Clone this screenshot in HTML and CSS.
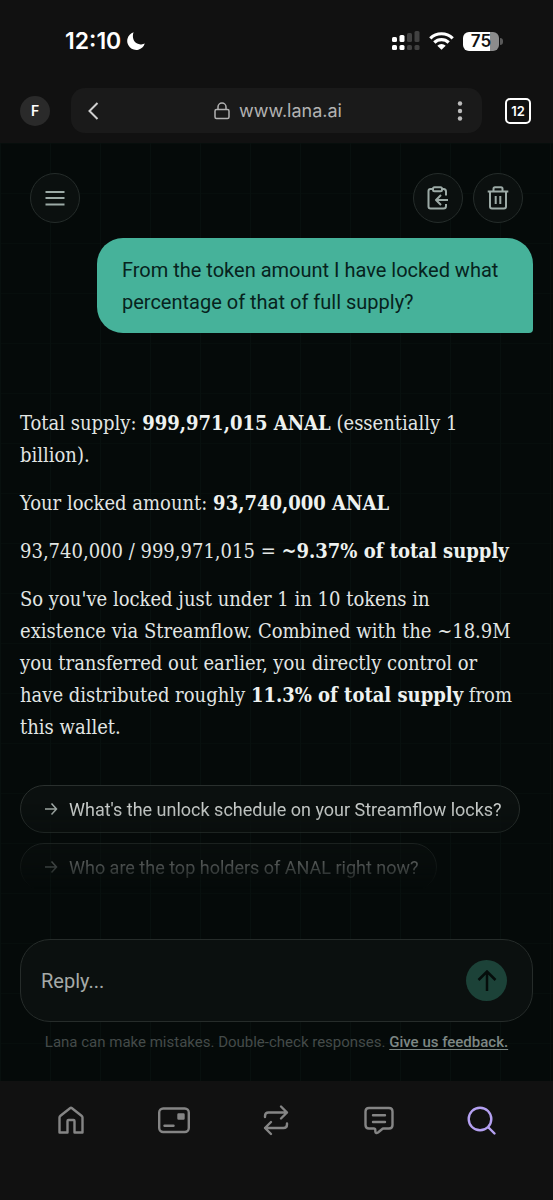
FILE: index.html
```html
<!DOCTYPE html>
<html lang="en">
<head>
<meta charset="utf-8">
<meta name="viewport" content="width=device-width, initial-scale=1">
<title>Lana</title>
<link rel="stylesheet" href="styles.css">
</head>
<body>
<header class="browser">
  <div class="status">
    <div class="clock">
      <span>12:10</span>
      <svg width="18" height="18" viewBox="0 0 18 18"><path fill="#fff" d="M6.600.3A9 9 0 1 0 17.800 11.600Q16 12.600 13.500 12.400C7 12 4.500 5.500 6.600.3Z"/></svg>
    </div>
    <div class="signals">
      <svg width="28" height="20" viewBox="0 0 28 20">
        <g fill="#fff"><rect y="6" width="5" height="5" rx="1.500"/><rect x="7.500" y="4" width="5" height="7" rx="1.500"/><rect y="14" width="5" height="5" rx="1.500"/><rect x="7.500" y="14" width="5" height="5" rx="1.500"/></g>
        <g fill="#414141"><rect x="15" y="2" width="5" height="9" rx="1.500"/><rect x="22.500" y="0" width="5" height="11" rx="1.500"/><rect x="15" y="14" width="5" height="5" rx="1.500"/><rect x="22.500" y="14" width="5" height="5" rx="1.500"/></g>
      </svg>
      <svg width="25" height="18" viewBox="0 0 25 18"><g fill="none" stroke="#fff" stroke-width="3.200"><path d="M1.300 6.300a16 16 0 0 1 22.400 0"/><path d="M5.300 10.500a10.300 10.300 0 0 1 14.400 0"/></g><path fill="#fff" d="M12.500 17.800 8.300 13.700a6 6 0 0 1 8.400 0Z"/></svg>
      <div class="battery"><span>75</span></div>
    </div>
  </div>
  <div class="address-row">
    <button class="avatar" aria-label="Profile">F</button>
    <div class="address">
      <button aria-label="Back"><svg width="12" height="20" viewBox="0 0 12 20"><path d="M10.500 2 2.500 10l8 8" fill="none" stroke="#d0d0d0" stroke-width="2"/></svg></button>
      <div class="url">
        <svg width="16" height="18" viewBox="0 0 16 18" fill="none" stroke="#b2b2b2" stroke-width="1.500"><rect x="1" y="7.500" width="14" height="9" rx="1.500"/><path d="M4 7.500V5a4 4 0 0 1 8 0v2.500"/></svg>
        <span>www.lana.ai</span>
      </div>
      <button aria-label="More"><svg width="6" height="20" viewBox="0 0 6 20" fill="#bcbcbc"><circle cx="3" cy="2.500" r="2.200"/><circle cx="3" cy="10" r="2.200"/><circle cx="3" cy="17.500" r="2.200"/></svg></button>
    </div>
    <button class="tabs" aria-label="Open tabs">12</button>
  </div>
</header>

<main class="page">
  <div class="toolbar">
    <button class="round" aria-label="Menu"><svg width="20" height="16" viewBox="0 0 20 16"><path d="M.5 2h19M.5 8h19M.5 14.500h19" stroke="#9caaa6" stroke-width="2"/></svg></button>
    <div class="tools">
      <button class="round" aria-label="Export"><svg width="22" height="24" viewBox="0 0 22 24" fill="none" stroke="#9caaa6" stroke-width="2" stroke-linejoin="round"><rect x="6" y="1.200" width="9" height="4" rx="1.500"/><path d="M6 3H3.500Q1.500 3 1.500 5v15.500q0 2 2 2h13q2.500 0 2.500-2.500v-2M15 3h1.500Q19 3 19 5.500V9.500M21 14H9.500M14 9l-5 5 5 5"/></svg></button>
      <button class="round" aria-label="Delete"><svg width="22" height="24" viewBox="0 0 22 24" fill="none" stroke="#9caaa6" stroke-width="2"><path d="M.7 5.500h20.600M6.500 5V2.800q0-1.500 1.500-1.500h6q1.500 0 1.500 1.500V5M3 5.500V20.500q0 2 2 2h12q2 0 2-2V5.500M8.700 10v8M13.300 10v8"/></svg></button>
    </div>
  </div>

  <p class="bubble">From the token amount I have locked what percentage of that of full supply?</p>

  <article class="answer">
    <p>Total supply: <strong>999,971,015 ANAL</strong> (essentially 1 billion).</p>
    <p>Your locked amount: <strong>93,740,000 ANAL</strong></p>
    <p>93,740,000 / 999,971,015 = <strong>~9.37% of total supply</strong></p>
    <p>So you've locked just under 1 in 10 tokens in existence via Streamflow. Combined with the ~18.9M you transferred out earlier, you directly control or have distributed roughly <strong>11.3% of total supply</strong> from this wallet.</p>
  </article>

  <div class="suggestions">
    <button class="chip"><svg width="14" height="14" viewBox="0 0 14 14"><path d="M1 7h11M7.500 1.500 12.500 7l-5 5.500"/></svg>What's the unlock schedule on your Streamflow locks?</button>
    <button class="chip"><svg width="14" height="14" viewBox="0 0 14 14"><path d="M1 7h11M7.500 1.500 12.500 7l-5 5.500"/></svg>Who are the top holders of ANAL right now?</button>
  </div>

  <form class="composer">
    <input type="text" placeholder="Reply..." aria-label="Reply">
    <button type="button" class="send" aria-label="Send"><svg width="20" height="22" viewBox="0 0 20 22"><path d="M10 21V2M1.500 10 10 1.500l8.500 8.500" fill="none" stroke="#050d0b" stroke-width="2.500"/></svg></button>
  </form>
  <p class="note">Lana can make mistakes. Double-check responses. <a href="#feedback">Give us feedback.</a></p>
</main>

<nav class="bottom">
  <a href="#home" aria-label="Home"><svg width="32" height="32" viewBox="0 0 32 32"><path d="M4.500 13.500Q4.500 12.500 5.500 11.700L15 4.200q1-.8 2 0l9.500 7.500q1 .8 1 1.800V28.500H19.500V17q0-1-1-1h-5q-1 0-1 1V28.500H4.500Z"/></svg></a>
  <a href="#wallet" aria-label="Wallet"><svg width="32" height="32" viewBox="0 0 32 32"><rect x="1.200" y="4.500" width="29.600" height="23.500" rx="4"/><path d="M6.500 21.700h9"/><rect x="20.500" y="10.500" width="5" height="4" fill="currentColor"/></svg></a>
  <a href="#swap" aria-label="Swap"><svg width="32" height="32" viewBox="0 0 32 32"><path d="M5 13V12Q5 8.500 8.500 8.500H27M21 2.500l6 6-6 6M27 19.500v1q0 3.500-3.500 3.500H5M11 18l-6 6 6 6"/></svg></a>
  <a href="#messages" aria-label="Messages"><svg width="32" height="32" viewBox="0 0 32 32"><path d="M6 4h20q3.500 0 3.500 3.500V21q0 3.500-3.500 3.500h-5.500Q19.500 24.500 18.700 25.500L15 28.500Q12.500 30 12.300 27.300V26q0-1.500-1.500-1.500H6Q2.500 24.500 2.500 21V7.500Q2.500 4 6 4ZM10 11.300h12M10 18h12"/></svg></a>
  <a href="#search" aria-label="Search" class="active"><svg width="32" height="32" viewBox="0 0 32 32"><circle cx="14" cy="15" r="11.300"/><path d="m22.500 23.500 6 6"/></svg></a>
</nav>
</body>
</html>
```
FILE: styles.css
```css
* { box-sizing: border-box; }

body {
  margin: 0;
  min-height: 100vh;
  display: flex;
  flex-direction: column;
  background: #111111;
  color: #e2e6e4;
  font-family: Roboto, sans-serif;
}

p { margin: 0; }

button {
  border: 0;
  padding: 0;
  background: none;
  color: inherit;
  font: inherit;
}

svg { display: block; flex: none; }

.browser { padding-bottom: 10px; }

.status {
  display: flex;
  justify-content: space-between;
  align-items: center;
  height: 88px;
  padding: 0 54px 6px 65px;
}

.clock {
  display: flex;
  align-items: center;
  gap: 6px;
  color: #ffffff;
  font: 600 23px Inter, sans-serif;
}

.signals { display: flex; align-items: center; gap: 9px; }

.battery {
  position: relative;
  width: 36px;
  height: 19px;
  border-radius: 6px;
  background: linear-gradient(to right, #ffffff 75%, #8c8c8c 75%);
  color: #111111;
  font: 600 17px/19px Inter, sans-serif;
  text-align: center;
}

.battery::after {
  content: "";
  position: absolute;
  right: -4px;
  top: 6px;
  width: 3px;
  height: 7px;
  border-radius: 0 3px 3px 0;
  background: #5a5a5a;
}

.address-row {
  display: flex;
  align-items: center;
  padding: 0 22px 0 20px;
}

.avatar {
  width: 30px;
  height: 30px;
  border-radius: 50%;
  background: #2a2a2a;
  color: #ffffff;
  font: 600 14px Inter, sans-serif;
}

.address {
  flex: 1;
  display: flex;
  align-items: center;
  justify-content: space-between;
  height: 45px;
  margin: 0 23px 0 21px;
  padding: 0 19px 0 16px;
  border-radius: 14px;
  background: #1a1a1a;
}

.url {
  display: flex;
  align-items: center;
  gap: 9px;
  color: #b2b2b2;
  font: 18px Inter, sans-serif;
}

.tabs {
  width: 26px;
  height: 26px;
  border: 2px solid #ffffff;
  border-radius: 5px;
  color: #ffffff;
  font: 600 13px Inter, sans-serif;
}

.page {
  display: flex;
  flex-direction: column;
  flex: 1;
  padding: 30px 20px 20px;
  background:
    linear-gradient(to right, #08100e 1px, transparent 1px) 0 0 / 50px 50px,
    linear-gradient(to bottom, #070e0c 1px, transparent 1px) 0 0 / 50px 50px,
    #050a09;
}

.toolbar {
  display: flex;
  justify-content: space-between;
  padding: 0 10px;
}

.tools { display: flex; gap: 10px; }

.round {
  display: grid;
  place-items: center;
  width: 50px;
  height: 50px;
  border: 1px solid #252c2a;
  border-radius: 50%;
  background: #0b100f;
}

.bubble {
  align-self: flex-end;
  max-width: 85%;
  margin-top: 15px;
  padding: 16px 25px 15px;
  border-radius: 26px 26px 4px 26px;
  background: #46b29a;
  color: #07231d;
  font-size: 20px;
  line-height: 32px;
}

.answer {
  display: grid;
  gap: 16px;
  margin-top: 74px;
  padding-right: 16px;
  font-family: "DejaVu Serif Condensed", "DejaVu Serif", serif;
  font-size: 20px;
  line-height: 32px;
}

.answer strong { color: #eef2f0; }

.suggestions {
  display: flex;
  flex-direction: column;
  align-items: flex-start;
  gap: 10px;
  margin-top: 42px;
  -webkit-mask-image: linear-gradient(to bottom, #000000 15%, rgba(0, 0, 0, 0.35) 75%, transparent 98%);
  mask-image: linear-gradient(to bottom, #000000 15%, rgba(0, 0, 0, 0.35) 75%, transparent 98%);
}

.chip {
  display: flex;
  align-items: center;
  gap: 11px;
  height: 48px;
  padding: 0 17px 0 23px;
  border: 1px solid #2a302e;
  border-radius: 24px;
  background: #0b100f;
  color: #d2d6d4;
  font-size: 18px;
}

.chip svg { fill: none; stroke: #a9b2af; stroke-width: 1.5; }

.composer {
  display: flex;
  align-items: center;
  height: 83px;
  margin-top: 48px;
  padding: 0 25px 0 20px;
  border: 1px solid #262c2a;
  border-radius: 30px;
  background: #0b100f;
}

.composer input {
  flex: 1;
  min-width: 0;
  padding: 0;
  border: 0;
  outline: 0;
  background: none;
  color: #e6eae8;
  font: 20px Roboto, sans-serif;
}

.composer input::placeholder { color: #a5aaa8; opacity: 1; }

.send {
  display: grid;
  place-items: center;
  width: 41px;
  height: 41px;
  border-radius: 50%;
  background: #1c4238;
}

.note {
  margin-top: 10px;
  color: #444b49;
  font-size: 15px;
  line-height: 20px;
  text-align: center;
}

.note a {
  color: #7d8784;
  font-weight: 500;
  text-underline-offset: 2px;
}

.bottom {
  display: flex;
  justify-content: space-around;
  height: 119px;
  padding: 23px 20px 0;
}

.bottom a { color: #858585; }
.bottom a.active { color: #b5a1f2; }

.bottom svg {
  fill: none;
  stroke: currentColor;
  stroke-width: 2.4;
  stroke-linecap: round;
  stroke-linejoin: round;
}
```
